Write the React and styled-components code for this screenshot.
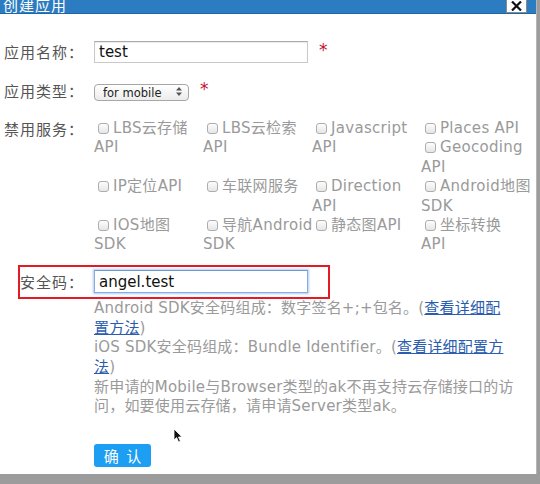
import React from "react";
import styled, { createGlobalStyle } from "styled-components";

const GlobalStyle = createGlobalStyle`
  html, body {
    margin: 0;
    padding: 0;
    background: #9c9c9c;
  }
  body {
    font-family: "DejaVu Sans", "Noto Sans CJK SC", sans-serif;
  }
`;

const Page = styled.div`
  width: 540px;
  height: 484px;
  overflow: hidden;
  position: relative;
`;

const Dialog = styled.div`
  width: 536px;
  height: 474px;
  background: #fff;
  border-right: 1px solid #b5b5b5;
  display: flex;
  flex-direction: column;
`;

const Header = styled.div`
  height: 13px;
  background: #2c7cc1;
  border-bottom: 1px solid #1f64a3;
  display: flex;
  justify-content: space-between;
  align-items: flex-start;
  overflow: hidden;
`;

const Title = styled.div`
  margin: -4px 0 0 3px;
  font-family: "Noto Sans CJK SC", sans-serif;
  font-size: 15px;
  letter-spacing: 1px;
  line-height: 18px;
  color: #fff;
`;

const CloseBox = styled.div`
  width: 19px;
  height: 12px;
  margin-right: 9px;
  background: #fff;
  border: 1px solid #8a8a8a;
  border-top: none;
  display: flex;
  align-items: center;
  justify-content: center;
`;

const Body = styled.div`
  padding: 27px 0 0 4px;
  display: flex;
  flex-direction: column;
  font-size: 15px;
  letter-spacing: 0.4px;
  color: #555;
`;

const Row = styled.div`
  display: grid;
  grid-template-columns: 90px 1fr;
  align-items: ${(p) => (p.$top ? "start" : "center")};
  margin-bottom: ${(p) => p.$gap || 0}px;
`;

const Label = styled.div`
  font-family: "Noto Sans CJK SC", sans-serif;
  font-size: 15px;
  letter-spacing: 1px;
  color: #555;
  line-height: 20px;
`;

const Field = styled.div`
  display: flex;
  align-items: center;
`;

const TextInput = styled.input`
  box-sizing: border-box;
  width: 214px;
  height: ${(p) => (p.$focus ? 23 : 22)}px;
  padding: 0 4px;
  font-family: "DejaVu Sans", sans-serif;
  font-size: 15px;
  color: #111;
  border: 1px solid ${(p) => (p.$focus ? "#84aee0" : "#c9c9c9")};
  border-top-color: ${(p) => (p.$focus ? "#6d9bd6" : "#a9a9a9")};
  box-shadow: ${(p) =>
    p.$focus ? "0 0 2px 1px rgba(110,160,225,0.55)" : "inset 0 1px 1px rgba(0,0,0,0.08)"};
  outline: none;
  background: #fff;
`;

const Star = styled.span`
  color: #c4122f;
  font-size: 17px;
  margin-left: ${(p) => p.$ml}px;
  line-height: 1;
  position: relative;
  top: -2px;
`;

const SelectWrap = styled.div`
  position: relative;
  width: 95px;
  height: 17px;
`;

const Select = styled.select`
  appearance: none;
  -webkit-appearance: none;
  box-sizing: border-box;
  width: 100%;
  height: 100%;
  padding: 0 0 0 8px;
  font-family: "DejaVu Sans", sans-serif;
  font-size: 11.5px;
  color: #222;
  border: 1px solid #a7a7a7;
  border-radius: 4px;
  background: linear-gradient(#ffffff, #ececec);
  outline: none;
`;

const SelectArrows = styled.svg`
  position: absolute;
  right: 7px;
  top: 4px;
  pointer-events: none;
`;

const ServiceGrid = styled.div`
  display: grid;
  grid-template-columns: repeat(4, 109px);
  line-height: 19.4px;
  color: #9a9a9a;
  font-size: 15px;
  letter-spacing: 0.3px;
`;

const Cell = styled.div`
  display: flex;
  flex-direction: column;
`;

const Service = styled.label`
  display: block;
  white-space: nowrap;
`;

const Box = styled.span`
  display: inline-block;
  box-sizing: border-box;
  width: 11px;
  height: 11px;
  margin: 0 4px 0 4px;
  vertical-align: -1px;
  border: 1px solid #adadad;
  border-radius: 3px;
  background: linear-gradient(#fdfdfd, #e6e6e6);
`;

const SecurityBox = styled.div`
  margin: 10px 0 0 14px;
  width: 308px;
  height: 30px;
  border: 2px solid #e21b24;
  display: grid;
  grid-template-columns: 74px 1fr;
  align-items: center;
`;

const Help = styled.div`
  margin: 0 0 0 90px;
  font-size: 15px;
  line-height: 19.7px;
  letter-spacing: 0.2px;
  color: #9a9a9a;
  white-space: nowrap;
`;

const HelpLink = styled.a`
  color: #2a5caf;
  text-decoration: underline;
`;

const Confirm = styled.button`
  margin: 27px 0 0 90px;
  width: 57px;
  height: 23px;
  border: none;
  border-radius: 3px;
  background: #1c9ef3;
  color: #fff;
  font-family: "Noto Sans CJK SC", sans-serif;
  font-size: 15px;
  letter-spacing: 2px;
  padding: 0 0 0 2px;
  line-height: 23px;
`;

const Pointer = styled.svg`
  position: absolute;
  left: 173px;
  top: 428px;
`;

const services = [
  [[["LBS云存储", "API"]], [["LBS云检索", "API"]], [["Javascript", "API"]], [["Places API"], ["Geocoding", "API"]]],
  [[["IP定位API"]], [["车联网服务"]], [["Direction", "API"]], [["Android地图", "SDK"]]],
  [[["IOS地图", "SDK"]], [["导航Android", "SDK"]], [["静态图API"]], [["坐标转换", "API"]]],
];

export default function App() {
  return (
    <Page>
      <GlobalStyle />
      <Dialog>
        <Header>
          <Title>创建应用</Title>
          <CloseBox>
            <svg width="11" height="10" viewBox="0 0 11 10">
              <path d="M1 0.5 L10 9.5 M10 0.5 L1 9.5" stroke="#111" strokeWidth="2.2" />
            </svg>
          </CloseBox>
        </Header>
        <Body>
          <Row $gap={18}>
            <Label>应用名称：</Label>
            <Field>
              <TextInput defaultValue="test" />
              <Star $ml={11}>*</Star>
            </Field>
          </Row>
          <Row $gap={18}>
            <Label>应用类型：</Label>
            <Field>
              <SelectWrap>
                <Select defaultValue="mobile">
                  <option value="mobile">for mobile</option>
                </Select>
                <SelectArrows width="6" height="9" viewBox="0 0 6 9">
                  <path d="M3 0 L6 3.5 L0 3.5 Z M3 9 L6 5.5 L0 5.5 Z" fill="#555" />
                </SelectArrows>
              </SelectWrap>
              <Star $ml={11}>*</Star>
            </Field>
          </Row>
          <Row $top>
            <Label>禁用服务：</Label>
            <ServiceGrid>
              {services.map((row, r) =>
                row.map((cell, c) => (
                  <Cell key={r + "-" + c}>
                    {cell.map((lines, i) => (
                      <Service key={i}>
                        <Box />
                        {lines[0]}
                        {lines[1] && <br />}
                        {lines[1]}
                      </Service>
                    ))}
                  </Cell>
                ))
              )}
            </ServiceGrid>
          </Row>
          <SecurityBox>
            <Label>安全码：</Label>
            <Field>
              <TextInput $focus defaultValue="angel.test" />
            </Field>
          </SecurityBox>
          <Help>
            Android SDK安全码组成：数字签名+;+包名。(<HelpLink>查看详细配</HelpLink>
            <br />
            <HelpLink>置方法</HelpLink>)
            <br />
            iOS SDK安全码组成：Bundle Identifier。(<HelpLink>查看详细配置方</HelpLink>
            <br />
            <HelpLink>法</HelpLink>)
            <br />
            新申请的Mobile与Browser类型的ak不再支持云存储接口的访
            <br />
            问，如要使用云存储，请申请Server类型ak。
          </Help>
          <div>
            <Confirm>确 认</Confirm>
          </div>
        </Body>
      </Dialog>
      <Pointer width="11" height="15" viewBox="0 0 11 15">
        <path d="M1 1 L1 12 L3.6 9.6 L5.6 14 L7.4 13.2 L5.5 9 L9 9 Z" fill="#111" stroke="#fff" strokeWidth="0.8" />
      </Pointer>
    </Page>
  );
}
